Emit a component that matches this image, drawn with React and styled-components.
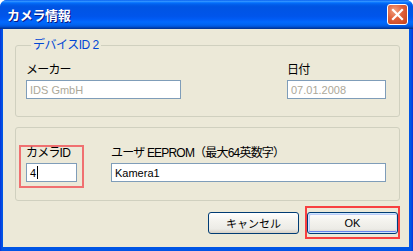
import React from 'react';
import styled, { createGlobalStyle } from 'styled-components';

const GlobalStyle = createGlobalStyle`
    html, body {
        margin: 0;
        padding: 0;
        background: #ffffff;
    }
    * {
        box-sizing: border-box;
    }
`;

const jp = `"Liberation Sans", "Noto Sans CJK JP", sans-serif`;

const Window = styled.div`
    width: 413px;
    height: 251px;
    display: flex;
    flex-direction: column;
    border-radius: 7px 7px 0 0;
    overflow: hidden;
    background: #0055e5;
    font-family: ${jp};
    font-size: 11px;
    color: #000;
`;

const TitleBar = styled.div`
    height: 29px;
    flex: none;
    display: flex;
    align-items: center;
    justify-content: space-between;
    padding: 0 5px 1px 7px;
    background: linear-gradient(
        to bottom,
        #0058ee 0%,
        #3593ff 4%,
        #288eff 6%,
        #127dff 8%,
        #036ffc 10%,
        #0262ee 14%,
        #0057e5 20%,
        #0054e3 24%,
        #0055eb 56%,
        #005bf5 66%,
        #026afe 76%,
        #0062ef 86%,
        #0052d6 92%,
        #0040ab 96%,
        #003092 100%
    );
`;

const Title = styled.span`
    color: #fff;
    font-family: "Noto Sans CJK JP", sans-serif;
    font-weight: bold;
    font-size: 13px;
    letter-spacing: -0.3px;
    text-shadow: 1px 1px 0 #0a1883;
`;

const CloseButton = styled.div`
    width: 21px;
    height: 21px;
    border: 1px solid #fff;
    border-radius: 3px;
    display: flex;
    align-items: center;
    justify-content: center;
    background: radial-gradient(circle at 35% 30%, #f0a080 0%, #e0603a 45%, #c4401a 100%);
`;

const Frame = styled.div`
    flex: 1;
    display: flex;
    padding: 0 4px 4px 3px;
    background: linear-gradient(to right, #0831d9 0px, #0055e5 2px, #0055e5 calc(100% - 2px), #0831d9 100%);
`;

const Client = styled.div`
    flex: 1;
    display: flex;
    flex-direction: column;
    background: #ece9d8;
    padding: 9px 9px 6px 12px;
`;

const GroupBox = styled.fieldset`
    margin: 0;
    margin-top: ${p => p.$top || 0}px;
    border: 1px solid #d0d0bf;
    border-radius: 3px;
    padding: ${p => p.$pad};
    display: flex;
    justify-content: space-between;
    align-items: flex-start;
`;

const Legend = styled.legend`
    color: #0046d5;
    font-size: 12px;
    line-height: 14px;
    padding: 0 2px;
    margin-left: 5px;
    letter-spacing: -0.5px;
`;

const Column = styled.div`
    display: flex;
    flex-direction: column;
    gap: 3px;
    margin-top: ${p => p.$top || 0}px;
`;

const Label = styled.span`
    font-size: 12px;
    line-height: ${p => p.$lh || 14}px;
    letter-spacing: -0.8px;
    white-space: nowrap;
`;

const Field = styled.div`
    width: ${p => p.$w}px;
    height: 19px;
    border: 1px solid #7f9db9;
    background: #fff;
    padding-left: 3px;
    display: flex;
    align-items: center;
    font-size: 11px;
    color: ${p => (p.$disabled ? '#aca899' : '#000')};
`;

const Caret = styled.span`
    display: inline-block;
    width: 1px;
    height: 13px;
    background: #000;
    margin-left: 1px;
`;

const Highlight = styled.div`
    border: 2px solid ${p => p.$color};
    padding: ${p => p.$pad};
`;

const ButtonRow = styled.div`
    display: flex;
    justify-content: flex-end;
    align-items: flex-start;
    gap: 6px;
    margin-top: 5px;
`;

const Button = styled.div`
    width: 91px;
    height: 22px;
    border: 1px solid #003c74;
    border-radius: 3px;
    display: flex;
    align-items: center;
    justify-content: center;
    font-size: 11px;
    margin-top: ${p => p.$top || 0}px;
    background: linear-gradient(to bottom, #ffffff 0%, #f4f3ee 40%, #ecebe6 80%, #d6d0c5 100%);
    box-shadow: ${p =>
        p.$default
            ? 'inset 0 0 0 1px #cee7ff, inset 0 -1px 0 1px #6982ee, inset 1px 1px 0 1px #bccbf8'
            : 'none'};
`;

export default function App() {
    return (
        <>
            <GlobalStyle />
            <Window>
                <TitleBar>
                    <Title>カメラ情報</Title>
                    <CloseButton>
                        <svg width="13" height="13" viewBox="0 0 13 13">
                            <path d="M2 2 L11 11 M11 2 L2 11" stroke="#fff" strokeWidth="2.2" strokeLinecap="square" />
                        </svg>
                    </CloseButton>
                </TitleBar>
                <Frame>
                    <Client>
                        <GroupBox $pad="11px 13px 17px 10px">
                            <Legend>デバイスID 2</Legend>
                            <Column>
                                <Label>メーカー</Label>
                                <Field $w={155} $disabled>IDS GmbH</Field>
                            </Column>
                            <Column>
                                <Label>日付</Label>
                                <Field $w={99} $disabled>07.01.2008</Field>
                            </Column>
                        </GroupBox>
                        <GroupBox $pad="17px 13px 12px 3px" $top={10}>
                            <Highlight $color="#f07070" $pad="0 5px 4px 5px">
                                <Column>
                                    <Label $lh={13}>カメラID</Label>
                                    <Field $w={51}>4<Caret /></Field>
                                </Column>
                            </Highlight>
                            <Column $top={2}>
                                <Label $lh={13}>ユーザ EEPROM（最大64英数字）</Label>
                                <Field $w={275}>Kamera1</Field>
                            </Column>
                        </GroupBox>
                        <ButtonRow>
                            <Button $top={6}>キャンセル</Button>
                            <Highlight $color="#f84040" $pad="4px 0 3px 0">
                                <Button $default>OK</Button>
                            </Highlight>
                        </ButtonRow>
                    </Client>
                </Frame>
            </Window>
        </>
    );
}
